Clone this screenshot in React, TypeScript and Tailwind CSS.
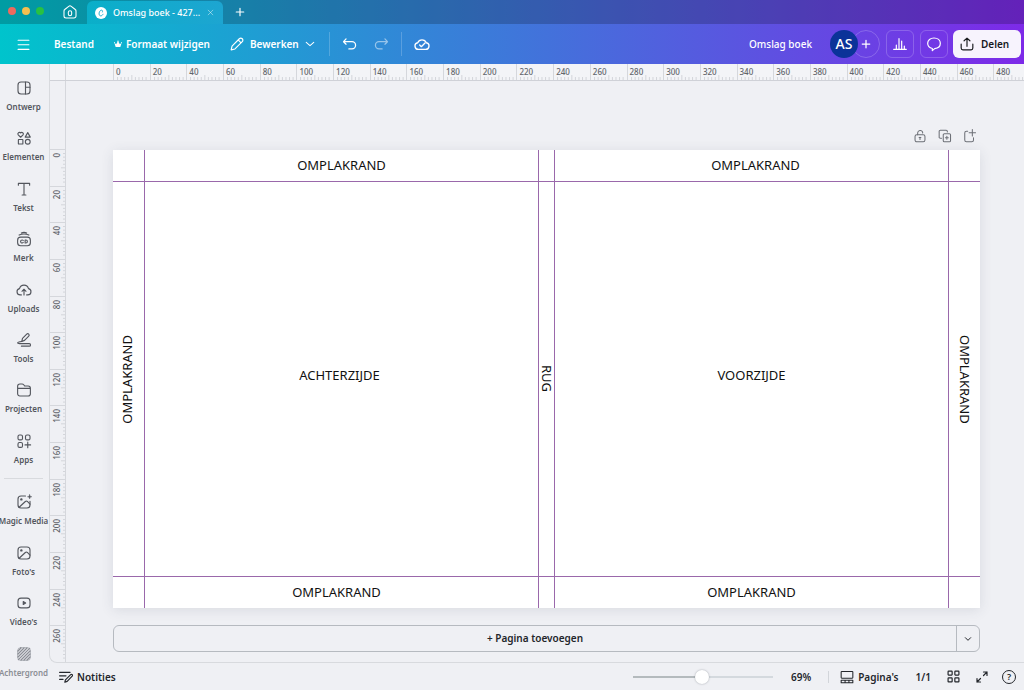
import { useState } from "react";
import type { ReactNode } from "react";

type IconProps = { children: ReactNode; className?: string; stroke?: number };

function Icon({ children, className = "size-4", stroke = 1.5 }: IconProps) {
  return (
    <svg
      viewBox="0 0 24 24"
      className={className}
      fill="none"
      stroke="currentColor"
      strokeWidth={stroke}
      strokeLinecap="round"
      strokeLinejoin="round"
      aria-hidden="true"
    >
      {children}
    </svg>
  );
}

const primaryTools: { label: string; icon: ReactNode }[] = [
  {
    label: "Ontwerp",
    icon: (
      <>
        <rect x="4" y="4" width="16" height="16" rx="4" />
        <path d="M14 4v16M14 11h6" />
      </>
    ),
  },
  {
    label: "Elementen",
    icon: (
      <>
        <path d="M7.500 11 4.300 7.800A2 2 0 0 1 7.500 5.300a2 2 0 0 1 3.200 2.500z" />
        <path d="m17 4.800 3.400 6h-6.800z" />
        <rect x="4.500" y="14" width="6" height="6" rx="0.500" />
        <circle cx="17" cy="17" r="3.200" />
      </>
    ),
  },
  {
    label: "Tekst",
    icon: <path d="M4.500 7V4.500h15V7M12 4.500V20M9.500 20h5" />,
  },
  {
    label: "Merk",
    icon: (
      <>
        <rect x="3.500" y="9.500" width="17" height="11.500" rx="4" />
        <path d="M5.500 6.800c4-1.800 9-1.800 13 0M8.500 4c2-.9 5-.9 7 0" />
        <path d="M11 14a2 2 0 1 0 0 2.600M13.500 13.300v4h1a2 2 0 0 0 0-4z" />
      </>
    ),
  },
  {
    label: "Uploads",
    icon: (
      <>
        <path d="M8.500 18.500H7a4.200 4.200 0 0 1-1-8.300 6.200 6.200 0 0 1 12 0 4.200 4.200 0 0 1-1 8.300h-1.500" />
        <path d="M12 18.500v-7M9.300 13.700l2.700-2.700 2.700 2.700" />
      </>
    ),
  },
  {
    label: "Tools",
    icon: (
      <>
        <path d="m9 14 1-4.200 5.600-5.600a1.800 1.800 0 0 1 2.700 2.700L12.700 12.500z" />
        <path d="M9 14c-2.500.2-5.500.9-5.500 2S9 16.800 19 16.800a1.700 1.700 0 0 1 0 3.400H8.500" />
      </>
    ),
  },
  {
    label: "Projecten",
    icon: (
      <path d="M3.500 10V7a3 3 0 0 1 3-3H9.500c1 0 1.500.3 2.100 1l1.400 1.700h4.500a3 3 0 0 1 3 3V17a3 3 0 0 1-3 3h-11a3 3 0 0 1-3-3zM3.500 9.800h17" />
    ),
  },
  {
    label: "Apps",
    icon: (
      <>
        <rect x="4" y="4" width="6" height="6.500" rx="2" />
        <rect x="14" y="4" width="6" height="6.500" rx="2" />
        <rect x="4" y="14" width="6" height="6.500" rx="2" />
        <path d="M17 13.500v7.500M13.300 17.200h7.500" />
      </>
    ),
  },
];

const mediaTools: { label: string; icon: ReactNode }[] = [
  {
    label: "Magic Media",
    icon: (
      <>
        <path d="M14 4H8a4 4 0 0 0-4 4v8a4 4 0 0 0 4 4h8a4 4 0 0 0 4-4v-5" />
        <path d="m5.500 19 8.300-7.700c.9-.8 1.800-.8 2.700 0L20 14.800" />
        <circle cx="8.500" cy="8.500" r="0.900" fill="currentColor" />
        <path d="M19.500 2l.8 2.200 2.200.8-2.200.8-.8 2.200-.8-2.200-2.200-.8 2.200-.8z" fill="currentColor" strokeWidth="0.500" />
      </>
    ),
  },
  {
    label: "Foto's",
    icon: (
      <>
        <rect x="4" y="4" width="16" height="16" rx="4" />
        <path d="m5.500 19 8.300-7.700c.9-.8 1.800-.8 2.700 0L20 14.800" />
        <circle cx="8.500" cy="8.500" r="0.900" fill="currentColor" />
      </>
    ),
  },
  {
    label: "Video's",
    icon: (
      <>
        <rect x="4" y="5.500" width="16" height="13" rx="4" />
        <path d="M11 10v4l3.200-2z" fill="currentColor" />
      </>
    ),
  },
  {
    label: "Achtergrond",
    icon: (
      <>
        <rect x="3.500" y="3.500" width="17" height="17" rx="4" strokeWidth="0.800" />
        <path d="M4 8l4-4M4 12l8-8M4 16 16 4M4.500 19.500l15-15M8 20 20 8M12 20l8-8M16 20l4-4" strokeWidth="1.700" />
      </>
    ),
  },
];

const horizontalMarks = Array.from({ length: 25 }, (_, i) => i * 20);
const verticalMarks = Array.from({ length: 14 }, (_, i) => i * 20);
const minorTicks = [1, 2, 3, 4, 5, 6, 7, 8, 9];

function ToolButton({ label, icon }: { label: string; icon: ReactNode }) {
  const faded = label === "Achtergrond";
  return (
    <button
      type="button"
      className={
        faded
          ? "flex min-w-0 flex-col items-center gap-1 pt-[6px] text-[#8b8e95]"
          : "flex min-w-0 flex-col items-center gap-1 pt-[6px] text-[#53565d]"
      }
    >
      <Icon className="size-[18px]">{icon}</Icon>
      <span className="text-[8px] leading-3 font-semibold whitespace-nowrap">{label}</span>
    </button>
  );
}

function HorizontalRuler() {
  return (
    <div className="flex h-[17px] shrink-0 border-b border-[#cfd1d7] bg-[#f3f4f7]">
      <div className="w-4 shrink-0 border-r border-[#d5d7dc]" />
      <div className="ml-[47px] grid w-[917px] shrink-0 grid-cols-[repeat(25,minmax(0,1fr))]">
        {horizontalMarks.map((mark) => (
          <div key={mark} className="relative border-l border-[#d5d7dc] pl-[2px] text-[8px] leading-[15px] font-medium text-[#62656b]">
            {mark}
            <svg className="absolute inset-0 size-full" stroke="#d3d5da" aria-hidden="true">
              {minorTicks.map((t) => (
                <line key={t} x1={`${t * 10}%`} x2={`${t * 10}%`} y1={t === 5 ? 11 : 13} y2="16" />
              ))}
            </svg>
          </div>
        ))}
      </div>
    </div>
  );
}

function VerticalRuler() {
  return (
    <div className="h-full w-4 shrink-0 overflow-hidden border-r border-[#d5d7dc]">
      <div className="mt-[68px] grid h-[513px] grid-rows-[repeat(14,minmax(0,1fr))]">
        {verticalMarks.map((mark) => (
          <div key={mark} className="relative border-t border-[#d5d7dc] pt-[3px] text-[8px] leading-[13px] font-medium text-[#62656b]">
            <span className="block rotate-180 [writing-mode:vertical-rl]">{mark}</span>
            <svg className="absolute inset-0 size-full" stroke="#d3d5da" aria-hidden="true">
              {minorTicks.map((t) => (
                <line key={t} y1={`${t * 10}%`} y2={`${t * 10}%`} x1={t === 5 ? 11 : 13} x2="16" />
              ))}
            </svg>
          </div>
        ))}
      </div>
    </div>
  );
}

function TitleBar() {
  return (
    <div className="flex h-6 shrink-0 items-center bg-black/20 text-white">
      <div className="flex w-11 gap-[6px] pb-[3px] pl-2">
        <span className="size-2 rounded-full bg-[#ed6a5e]" />
        <span className="size-2 rounded-full bg-[#f5bf4f]" />
        <span className="size-2 rounded-full bg-[#28c142]" />
      </div>
      <button type="button" aria-label="Home" className="flex w-[43px] justify-center pl-2">
        <Icon className="size-4" stroke={1.6}>
          <path d="M3 10.500c0-1 .3-1.600 1.100-2.200l6-4.800a3 3 0 0 1 3.800 0l6 4.800c.8.600 1.100 1.200 1.100 2.200V18a3 3 0 0 1-3 3H6a3 3 0 0 1-3-3z" />
          <rect x="9.500" y="10" width="5" height="7.500" rx="2.500" />
        </Icon>
      </button>
      <div className="mt-px flex h-[23px] w-[136px] items-center rounded-t-md bg-[linear-gradient(90deg,#0aafc9,#1da5d1)] pl-2">
        <svg viewBox="0 0 24 24" className="size-3 shrink-0" aria-hidden="true">
          <circle cx="12" cy="12" r="12" fill="#fff" />
          <path d="M16 14.500c-1.200 2.300-3 3.500-4.800 3.300-2.400-.3-3.500-3-2.900-6 .6-3.200 2.700-5.700 5-5.500 1.700.2 2.400 1.800 1.600 3.700" fill="none" stroke="#12a8cc" strokeWidth="1.800" strokeLinecap="round" />
        </svg>
        <span className="ml-[6px] text-[9px] leading-3 font-medium whitespace-nowrap">Omslag boek - 427...</span>
        <button type="button" aria-label="Tabblad sluiten" className="mr-[9px] ml-auto text-white/60">
          <Icon className="size-[7px]" stroke={2.5}>
            <path d="M4 4l16 16M20 4 4 20" />
          </Icon>
        </button>
      </div>
      <button type="button" aria-label="Nieuw tabblad" className="ml-3">
        <Icon className="size-[10px]" stroke={2.8}>
          <path d="M12 3v18M3 12h18" />
        </Icon>
      </button>
    </div>
  );
}

function Toolbar() {
  return (
    <div className="flex h-10 shrink-0 items-center pr-[3px] pl-[17px] text-[10px] leading-4 font-semibold whitespace-nowrap text-white">
      <button type="button" aria-label="Menu" className="mr-6">
        <Icon className="size-[13px]" stroke={2}>
          <path d="M2 4h20M2 12.500h20M2 21h20" />
        </Icon>
      </button>
      <button type="button" className="mr-5">Bestand</button>
      <button type="button" className="mr-5 flex items-center gap-1">
        <svg viewBox="0 0 24 24" className="size-2" fill="currentColor" aria-hidden="true">
          <path d="M5 21 1 8l5.500 5L12 3l5.500 10L23 8l-4 13z" />
          <circle cx="1.500" cy="7.500" r="1.500" />
          <circle cx="12" cy="3.500" r="2" />
          <circle cx="22.500" cy="7.500" r="1.500" />
        </svg>
        Formaat wijzigen
      </button>
      <button type="button" className="flex items-center">
        <Icon className="mr-[6px] size-[14px]" stroke={2}>
          <path d="M2 22l1.500-6.500L16 3a3 3 0 0 1 5 5L8.500 20.500zM14 5l5 5" />
        </Icon>
        Bewerken
        <Icon className="ml-[6px] size-[10px]" stroke={2.5}>
          <path d="m3 8 9 8 9-8" />
        </Icon>
      </button>
      <span className="mr-3 ml-[14px] h-6 w-px bg-white/20" />
      <button type="button" aria-label="Ongedaan maken">
        <Icon className="size-[15px]" stroke={2}>
          <path d="M6.500 3 2.500 7.500l4 4M2.500 7.500H16a5.500 5.500 0 0 1 0 11.500h-5" />
        </Icon>
      </button>
      <button type="button" aria-label="Opnieuw" className="ml-[17px] opacity-50">
        <Icon className="size-[15px]" stroke={2}>
          <path d="m17.500 3 4 4.500-4 4M21.500 7.500H8A5.500 5.500 0 0 0 8 19h5" />
        </Icon>
      </button>
      <span className="mx-3 h-6 w-px bg-white/20" />
      <button type="button" aria-label="Opgeslagen">
        <Icon className="size-4" stroke={2}>
          <path d="M6.500 20a5 5 0 0 1-1-9.900 7 7 0 0 1 13 0A5 5 0 0 1 17.500 20z" />
          <path d="m8.500 13.500 2.500 2.500 5.500-5.500" />
        </Icon>
      </button>
      <span className="mr-[18px] ml-auto font-medium">Omslag boek</span>
      <span className="z-10 flex size-7 items-center justify-center rounded-full bg-[#0b3399] text-sm font-medium">AS</span>
      <button type="button" aria-label="Lid toevoegen" className="mr-[6px] -ml-[6px] flex size-7 items-center justify-center rounded-full border border-white/20">
        <Icon className="size-[10px]" stroke={3}>
          <path d="M12 3v18M3 12h18" />
        </Icon>
      </button>
      <button type="button" aria-label="Statistieken" className="mr-[6px] flex size-7 items-center justify-center rounded-md border border-white/20">
        <Icon className="size-4" stroke={1.8}>
          <path d="M2.500 20h19M6.500 20v-6.500M10.500 20V4M14.500 20V7.500M18.500 20v-5" />
        </Icon>
      </button>
      <button type="button" aria-label="Opmerkingen" className="mr-[5px] flex size-7 items-center justify-center rounded-md border border-white/20">
        <Icon className="size-4" stroke={1.8}>
          <path d="M12 3c5.500 0 9.500 3.300 9.500 8 0 4.400-3.500 7.500-8.500 8l-3.500 3v-3.300C5.500 17.800 2.500 15 2.500 11c0-4.700 4-8 9.500-8z" />
        </Icon>
      </button>
      <button type="button" className="flex h-7 w-[68px] items-center gap-[7px] rounded-md bg-[#f7f3fd] pl-[7px] text-[#17191d]">
        <Icon className="size-[14px]" stroke={2}>
          <path d="M2 12v7a3 3 0 0 0 3 3h14a3 3 0 0 0 3-3v-7M12 16V2M7 6.500 12 2l5 4.500" />
        </Icon>
        Delen
      </button>
    </div>
  );
}

function PageSheet() {
  return (
    <div className="grid h-[458px] grid-cols-[32px_minmax(0,1fr)_16px_minmax(0,1fr)_31px] grid-rows-[32px_minmax(0,1fr)_31px] bg-white text-[13px] leading-4 text-[#111] shadow-[0_2px_12px_rgba(60,66,87,0.12)]">
      <div className="border-r border-b border-[#9a68ab]" />
      <div className="flex items-center justify-center border-r border-b border-[#9a68ab] pb-px">OMPLAKRAND</div>
      <div className="border-r border-b border-[#9a68ab]" />
      <div className="flex items-center justify-center border-r border-b border-[#9a68ab] pb-px pl-2">OMPLAKRAND</div>
      <div className="border-b border-[#9a68ab]" />

      <div className="flex items-center justify-center border-r border-b border-[#9a68ab] pr-1">
        <span className="rotate-180 [writing-mode:vertical-rl]">OMPLAKRAND</span>
      </div>
      <div className="flex items-center justify-center border-r border-b border-[#9a68ab] pr-1 pb-2">ACHTERZIJDE</div>
      <div className="flex items-center justify-center border-r border-b border-[#9a68ab]">
        <span className="[writing-mode:vertical-rl]">RUG</span>
      </div>
      <div className="flex items-center justify-center border-r border-b border-[#9a68ab] pb-2">VOORZIJDE</div>
      <div className="flex items-center justify-center border-b border-[#9a68ab]">
        <span className="[writing-mode:vertical-rl]">OMPLAKRAND</span>
      </div>

      <div className="border-r border-[#9a68ab]" />
      <div className="flex items-center justify-center border-r border-[#9a68ab] pr-[10px] pb-px">OMPLAKRAND</div>
      <div className="border-r border-[#9a68ab]" />
      <div className="flex items-center justify-center border-r border-[#9a68ab] pb-px">OMPLAKRAND</div>
      <div />
    </div>
  );
}

function Workspace() {
  return (
    <div className="flex min-w-0 flex-1 flex-col pt-[47px] pr-11 pl-[47px]">
      <div className="flex h-[22px] shrink-0 justify-end gap-[11px] pr-[3px] text-[#6d7077]">
        <button type="button" aria-label="Ontgrendelen" className="h-4">
          <Icon className="size-[14px]" stroke={1.8}>
            <rect x="3.500" y="10" width="17" height="12" rx="3" />
            <path d="M8 10V6.500A4.500 4.500 0 0 1 16.500 5v2M12 14v4M10.500 14.500h3" />
          </Icon>
        </button>
        <button type="button" aria-label="Pagina dupliceren" className="h-4">
          <Icon className="size-[14px]" stroke={1.8}>
            <path d="M6 16H4a2 2 0 0 1-2-2V4a2 2 0 0 1 2-2h10a2 2 0 0 1 2 2v1" />
            <rect x="9" y="8" width="12.500" height="14" rx="2" />
            <path d="M15.200 12.500v5M12.700 15h5" />
          </Icon>
        </button>
        <button type="button" aria-label="Pagina invoegen" className="h-4">
          <Icon className="size-[14px]" stroke={1.8}>
            <path d="M8 4H6a3 3 0 0 0-3 3v12a3 3 0 0 0 3 3h9a3 3 0 0 0 3-3v-4M16 1v11M10.500 6.500h11" />
          </Icon>
        </button>
      </div>
      <PageSheet />
      <div className="mt-[17px] flex h-[27px] shrink-0 rounded-md border border-[#b6bac0] text-[10px] font-semibold text-[#23262b]">
        <button type="button" className="flex-1">+ Pagina toevoegen</button>
        <button type="button" aria-label="Meer opties" className="flex w-[23px] items-center justify-center border-l border-[#b6bac0]">
          <Icon className="size-2" stroke={3}>
            <path d="m4 8 8 8 8-8" />
          </Icon>
        </button>
      </div>
    </div>
  );
}

function Footer() {
  const [position, setPosition] = useState(49);
  return (
    <footer className="flex h-[27px] shrink-0 items-center pr-2 pl-[10px] text-[10px] leading-4 font-semibold text-[#23262b]">
      <button type="button" className="flex items-center gap-1">
        <Icon className="size-[14px]" stroke={2}>
          <path d="M1 4h18M1 10h11M1 16h6M10 21l1-4L20 8a1.800 1.800 0 0 1 2.600 2.600L14 19.500z" />
        </Icon>
        Notities
      </button>
      <input
        type="range"
        min={0}
        max={100}
        value={position}
        onChange={(e) => setPosition(Number(e.target.value))}
        aria-label="Zoom"
        className="mr-[18px] ml-auto h-4 w-[140px] appearance-none bg-[linear-gradient(90deg,#b4babd_50%,#d4d9de_50%)] bg-[length:100%_2px] bg-center bg-no-repeat [&::-webkit-slider-thumb]:size-[14px] [&::-webkit-slider-thumb]:appearance-none [&::-webkit-slider-thumb]:rounded-full [&::-webkit-slider-thumb]:bg-white [&::-webkit-slider-thumb]:shadow-[0_0_2px_rgba(40,50,60,0.4)]"
      />
      <button type="button">69%</button>
      <span className="mr-[11px] ml-[17px] h-3 w-px bg-[#d2d5da]" />
      <button type="button" className="mr-[17px] flex items-center gap-1">
        <Icon className="size-[14px]" stroke={1.8}>
          <rect x="2" y="2.500" width="20" height="11.500" rx="1" />
          <path d="M2 17.500h20v4.500H2zM8.700 17.500V22M15.300 17.500V22" />
        </Icon>
        Pagina's
      </button>
      <span className="mr-4">1/1</span>
      <button type="button" aria-label="Rasterweergave" className="mr-4">
        <Icon className="size-[13px]" stroke={2.2}>
          <rect x="2" y="2" width="7.500" height="7.500" rx="1" />
          <rect x="14.500" y="2" width="7.500" height="7.500" rx="1" />
          <rect x="2" y="14.500" width="7.500" height="7.500" rx="1" />
          <rect x="14.500" y="14.500" width="7.500" height="7.500" rx="1" />
        </Icon>
      </button>
      <button type="button" aria-label="Volledig scherm" className="mr-[14px]">
        <Icon className="size-3" stroke={2.4}>
          <path d="M15 2h7v7M22 2l-7 7M9 22H2v-7M2 22l7-7" />
        </Icon>
      </button>
      <button type="button" aria-label="Help" className="flex size-[14px] items-center justify-center rounded-full border border-[#23262b] text-[9px] leading-3">
        ?
      </button>
    </footer>
  );
}

export default function App() {
  return (
    <div className="flex h-screen flex-col overflow-hidden bg-[#eff0f4] font-['Noto_Sans',sans-serif]">
      <header className="flex shrink-0 flex-col bg-[linear-gradient(90deg,#00c4cc,#7d2ae8)]">
        <TitleBar />
        <Toolbar />
      </header>
      <div className="flex min-h-0 flex-1">
        <nav className="w-[49px] shrink-0 overflow-hidden pt-[9px] pr-[2px]">
          <div className="grid h-[403px] grid-rows-8">
            {primaryTools.map((tool) => (
              <ToolButton key={tool.label} {...tool} />
            ))}
          </div>
          <hr className="mx-1 mt-[2px] mb-2 border-[#d8dade]" />
          <div className="grid h-[202px] grid-rows-4">
            {mediaTools.map((tool) => (
              <ToolButton key={tool.label} {...tool} />
            ))}
          </div>
        </nav>
        <div className="flex min-w-0 flex-1 flex-col">
          <main className="flex min-h-0 flex-1 flex-col overflow-hidden rounded-bl-lg border-b border-l border-[#d8dade]">
            <HorizontalRuler />
            <div className="flex min-h-0 flex-1">
              <VerticalRuler />
              <Workspace />
            </div>
          </main>
          <Footer />
        </div>
      </div>
    </div>
  );
}
